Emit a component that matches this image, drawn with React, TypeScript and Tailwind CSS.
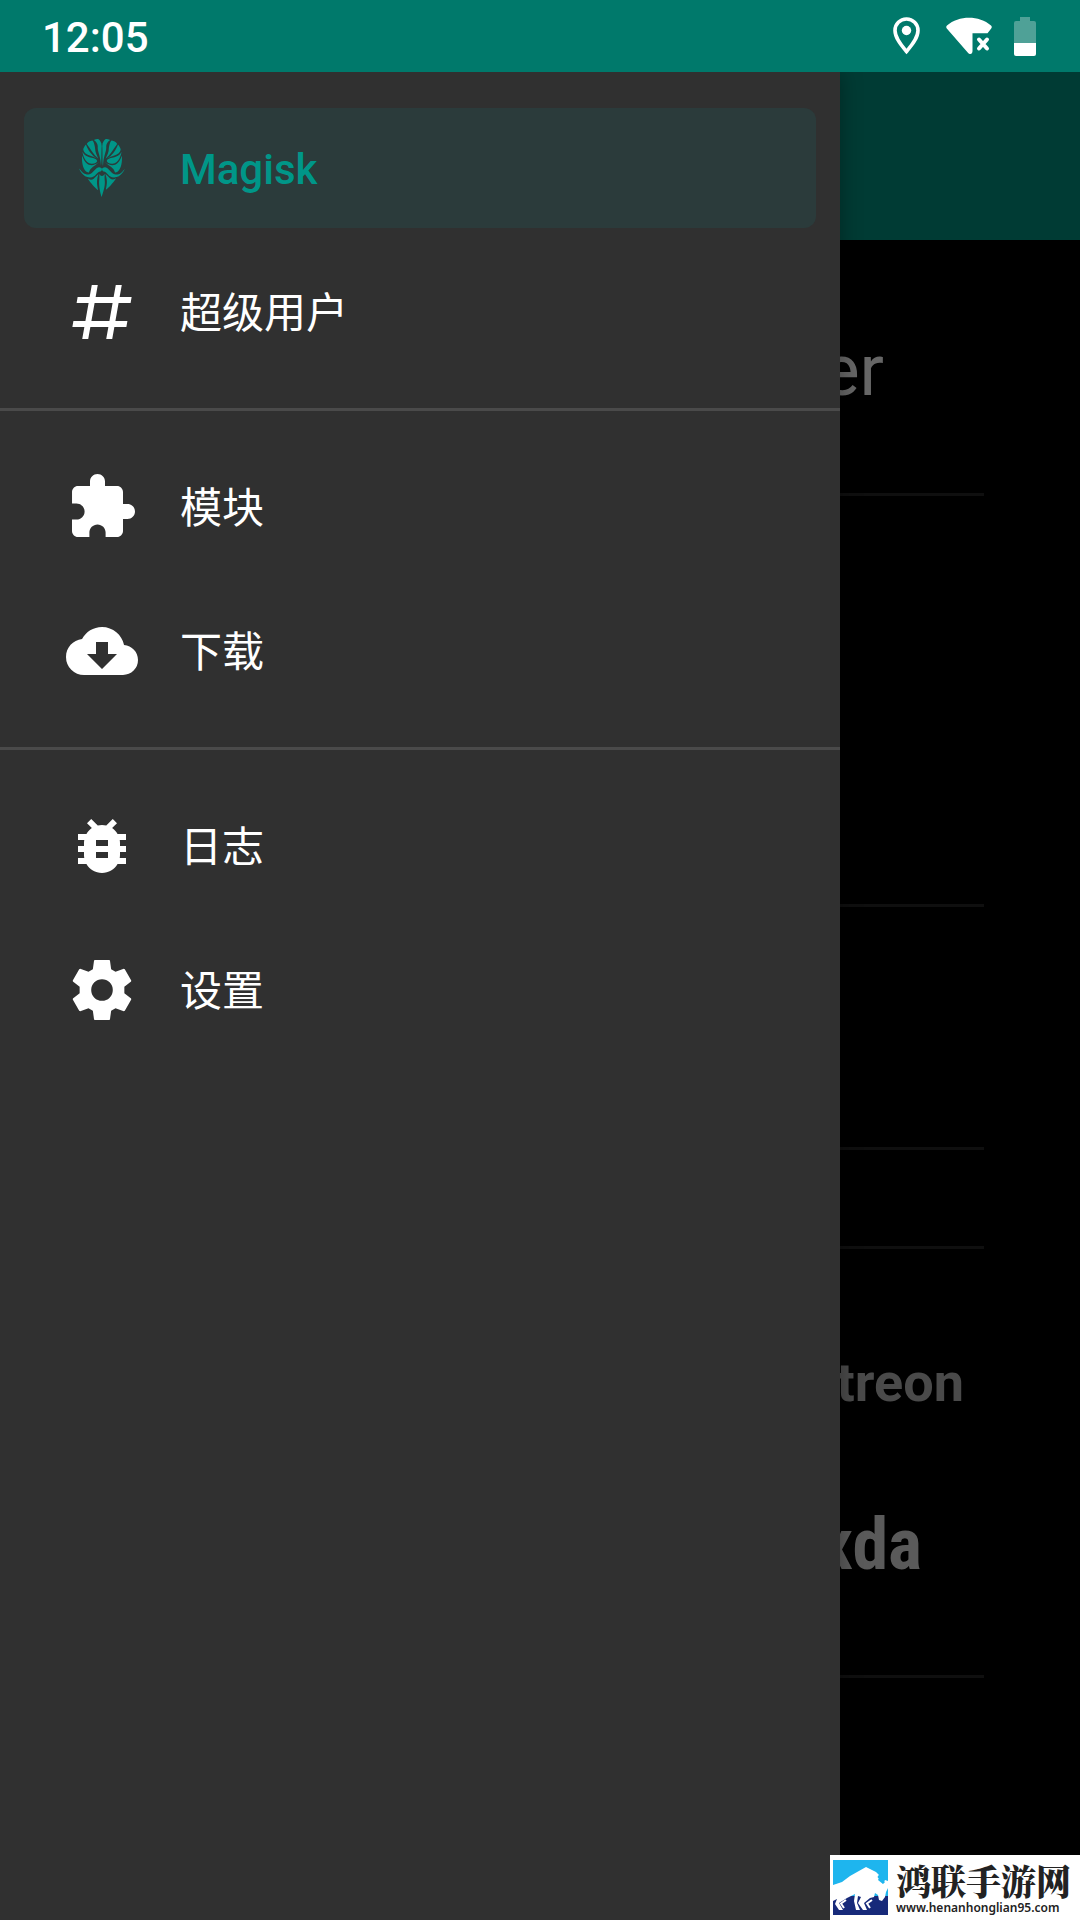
import type { ReactNode } from "react";
import { SiMagisk } from "react-icons/si";

function Glyph({ d }: { d: string }) {
  return (
    <svg viewBox="0 0 24 24" className="size-[72px] shrink-0 fill-current" fillRule="evenodd" aria-hidden="true">
      <path d={d} />
    </svg>
  );
}

const POUND =
  "M5.41,21L6.12,17H2.12L2.47,15H6.47L7.53,9H3.53L3.88,7H7.88L8.59,3H10.59L9.88,7H15.88L16.59,3H18.59L17.88,7H21.88L21.53,9H17.53L16.47,15H20.47L20.12,17H16.12L15.41,21H13.41L14.12,17H8.12L7.41,21H5.41M9.53,9L8.47,15H14.47L15.53,9H9.53Z";
const PUZZLE =
  "M20.5 11H19V7c0-1.1-.9-2-2-2h-4V3.5C13 2.12 11.88 1 10.5 1S8 2.12 8 3.5V5H4c-1.1 0-1.99.9-1.99 2v3.8H3.5c1.49 0 2.7 1.21 2.7 2.7s-1.21 2.7-2.7 2.7H2V20c0 1.1.9 2 2 2h3.8v-1.5c0-1.49 1.21-2.7 2.7-2.7 1.49 0 2.7 1.21 2.7 2.7V22H17c1.1 0 2-.9 2-2v-4h1.5c1.38 0 2.5-1.12 2.5-2.5S21.88 11 20.5 11z";
const CLOUD =
  "M17,13L12,18L7,13H10V9H14V13M19.35,10.03C18.67,6.59 15.64,4 12,4C9.11,4 6.6,5.64 5.35,8.03C2.34,8.36 0,10.9 0,14A6,6 0 0,0 6,20H19A5,5 0 0,0 24,15C24,12.36 21.95,10.22 19.35,10.03Z";
const BUG =
  "M20 8h-2.81c-.45-.78-1.07-1.45-1.82-1.96L17 4.41 15.59 3l-2.17 2.17C12.96 5.06 12.49 5 12 5c-.49 0-.96.06-1.41.17L8.41 3 7 4.41l1.62 1.63C7.88 6.55 7.26 7.22 6.81 8H4v2h2.09c-.05.33-.09.66-.09 1v1H4v2h2v1c0 .34.04.67.09 1H4v2h2.81c1.04 1.79 2.97 3 5.19 3s4.15-1.21 5.19-3H20v-2h-2.09c.05-.33.09-.66.09-1v-1h2v-2h-2v-1c0-.34-.04-.67-.09-1H20V8zm-6 8h-4v-2h4v2zm0-4h-4v-2h4v2z";
const GEAR =
  "M9.6 2H14.4L14.65 2.2L15.05 5.05L16.5 5.95L19.25 4.95L19.6 5.1L21.75 8.85L21.7 9.15L19.45 10.9V13.1L21.7 14.85L21.75 15.15L19.6 18.9L19.25 19.05L16.5 18.05L15.05 18.95L14.65 21.8L14.4 22H9.6L9.35 21.8L8.95 18.95L7.5 18.05L4.75 19.05L4.4 18.9L2.25 15.15L2.3 14.85L4.55 13.1V10.9L2.3 9.15L2.25 8.85L4.4 5.1L4.75 4.95L7.5 5.95L8.95 5.05L9.35 2.2ZM12 8.4A3.6 3.6 0 1 0 12 15.6A3.6 3.6 0 1 0 12 8.4Z";

function NavItem({ icon, label, active = false }: { icon: ReactNode; label: string; active?: boolean }) {
  return (
    <button
      type="button"
      aria-current={active ? "page" : undefined}
      className={
        active
          ? "flex h-[120px] w-full items-center gap-[42px] rounded-xl bg-[#2b3b3b] px-[42px] text-left font-medium text-[#009688]"
          : "flex h-[120px] w-full items-center gap-[42px] rounded-xl px-[42px] text-left text-white"
      }
    >
      {icon}
      <span className="pt-1">{label}</span>
    </button>
  );
}

function NavGroup({ children }: { children: ReactNode }) {
  return <div className="flex flex-col gap-6 px-6 py-9">{children}</div>;
}

function StatusBar() {
  return (
    <header className="relative z-10 flex h-[72px] items-center justify-between bg-[#00796b] pr-11 pl-[42px] text-white">
      <time className="pt-1 text-[42px] leading-[48px] font-medium">12:05</time>
      <div className="flex items-center gap-[26px]">
        <svg viewBox="0 0 27 38" className="h-[38px] w-[27px]" aria-label="Location">
          <path
            d="M13.5 2A11.4 11.4 0 0 0 2 13.4C2 21 8.500 28.500 13.500 34.500C18.500 28.500 25 21 25 13.400A11.400 11.400 0 0 0 13.500 2Z"
            fill="none"
            stroke="#fff"
            strokeWidth="3.600"
          />
          <circle cx="13.500" cy="13.500" r="4.700" fill="#fff" />
        </svg>
        <svg viewBox="0 0 46 38" className="h-[38px] w-[46px]" aria-label="Wi-Fi without internet">
          <path
            d="M1 8.500C13 -1.800 33 -1.800 45 8.500C46 9.500 46 10.500 45.200 11.500L41.500 16.200H26.500V34C26.500 37.500 23.800 38 21.700 35.500L.8 11.500C0 10.500 0 9.500 1 8.500Z"
            fill="#fff"
          />
          <path d="M33 22.500L41 31.500M41 22.500L33 31.500" stroke="#fff" strokeWidth="4" strokeLinecap="round" />
        </svg>
        <svg viewBox="0 0 22 39" className="-ml-1 h-[39px] w-[22px]" aria-label="Battery">
          <path d="M6 0H16V4H20Q22 4 22 6V26H0V6Q0 4 2 4H6Z" fill="#4fa197" />
          <path d="M0 26H22V37Q22 39 20 39H2Q0 39 0 37Z" fill="#fff" />
        </svg>
      </div>
    </header>
  );
}

function HomeScreen() {
  return (
    <main>
      <div className="h-[168px] bg-[#003b34]" />
      <div className="px-24">
        <section className="flex h-64 items-center justify-end border-b-[3px] border-[#0f0f0f] pt-2 pr-[100px]">
          <h1 className="text-7xl text-[#666]">Manager</h1>
        </section>
        <section className="h-[411px] border-b-[3px] border-[#0f0f0f]" />
        <section className="h-[243px] border-b-[3px] border-[#0f0f0f]" />
        <section className="h-[99px] border-b-[3px] border-[#0f0f0f]" />
        <section className="flex h-[429px] flex-col items-end justify-center border-b-[3px] border-[#0f0f0f] pt-1">
          <a href="#patreon" className="pr-5 text-[54px] leading-[162px] font-bold text-[#4a4a4a]">
            Patreon
          </a>
          <a
            href="#xda"
            className="pr-[62px] font-['Liberation_Sans_Narrow','Roboto_Condensed',Roboto,sans-serif] text-[72px] leading-[162px] font-bold text-[#5a5a5a]"
          >
            xda
          </a>
        </section>
      </div>
    </main>
  );
}

function SiteBadge() {
  return (
    <aside className="absolute right-0 bottom-0 z-20 flex h-[65px] w-[250px] items-center gap-2 bg-white pl-[3px] text-[#222]">
      <svg viewBox="0 0 55 55" className="size-[55px] shrink-0" aria-hidden="true">
        <path d="M0 0H55V55H0Z" fill="#1eb5ee" />
        <path d="M0 36H55V55H0Z" fill="#172a7a" />
        <path
          d="M0 25L9 22L17 16L33 7L43 12L47 16L45 20L50 24L52 20L55 21V28L53 32L52 37L49 41L46 40L45 35L42 33L41 37L37 38L31 43L34 50H30L25 43L28 37L25 36L24 43L27 50H23L21 41L22 34L14 38L6 43L10 50H6L2 44L4 39L0 41Z"
          fill="#fff"
        />
        <path d="M13 40L8 43.500L11 48M39 40L34 43.500L37 48" fill="none" stroke="#fff" strokeWidth="2" />
        <path d="M50 11L46 17L51 23" fill="none" stroke="#1eb5ee" strokeWidth="2.500" />
      </svg>
      <div className="pt-1">
        <p className="font-['Noto_Serif_CJK_SC','Noto_Sans_CJK_SC',serif] text-[35px] leading-9 font-black">鸿联手游网</p>
        <p className="font-['Noto_Sans',sans-serif] text-[12px] leading-5 font-semibold">www.henanhonglian95.com</p>
      </div>
    </aside>
  );
}

export default function App() {
  return (
    <div className="relative flex min-h-screen flex-col overflow-hidden bg-black font-[Roboto,'Noto_Sans_CJK_SC',sans-serif]">
      <StatusBar />
      <div className="relative grow">
        <HomeScreen />
        <nav
          aria-label="Magisk"
          className="absolute inset-y-0 left-0 w-7/9 divide-y-[3px] divide-[#4a4a4a] bg-[#303030] text-[42px] leading-[60px] shadow-[0_0_20px_rgba(0,0,0,0.35)]"
        >
          <NavGroup>
            <NavItem
              active
              label="Magisk"
              icon={
                <span className="flex size-[72px] items-center justify-center">
                  <SiMagisk className="size-[58px]" />
                </span>
              }
            />
            <NavItem label="超级用户" icon={<Glyph d={POUND} />} />
          </NavGroup>
          <NavGroup>
            <NavItem label="模块" icon={<Glyph d={PUZZLE} />} />
            <NavItem label="下载" icon={<Glyph d={CLOUD} />} />
          </NavGroup>
          <NavGroup>
            <NavItem label="日志" icon={<Glyph d={BUG} />} />
            <NavItem label="设置" icon={<Glyph d={GEAR} />} />
          </NavGroup>
        </nav>
      </div>
      <SiteBadge />
    </div>
  );
}
